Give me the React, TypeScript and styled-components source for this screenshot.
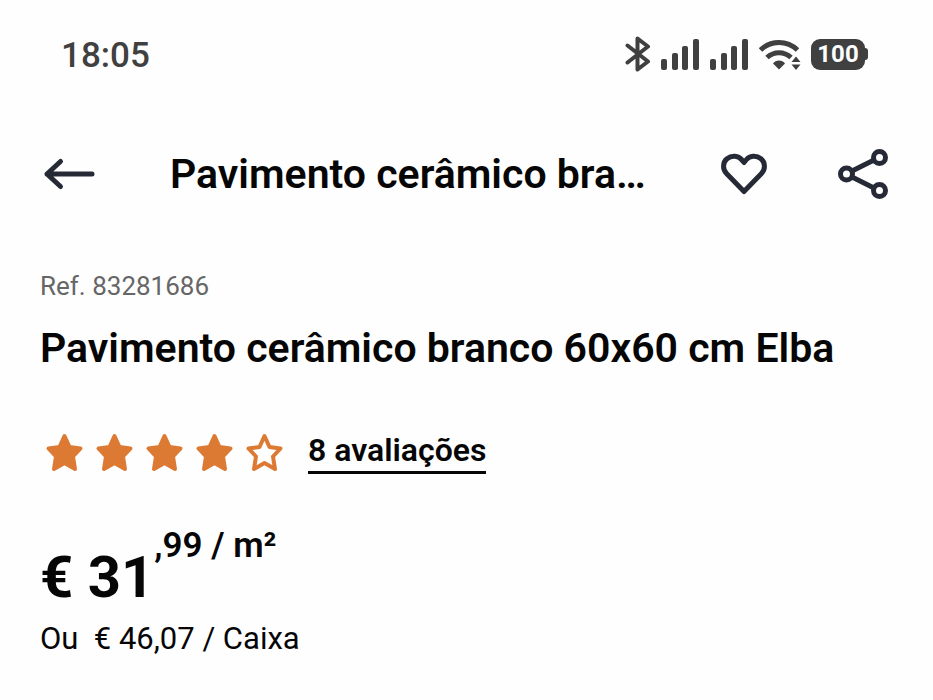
import React from "react";
import styled, { createGlobalStyle } from "styled-components";

const GlobalStyle = createGlobalStyle`
  * { box-sizing: border-box; }
  body {
    margin: 0;
    background: #fefefe;
    color: #060606;
    font-family: Roboto, "Liberation Sans", sans-serif;
  }
  h1, h2, p { margin: 0; font-weight: 600; }
  svg { display: block; flex: none; }
`;

const Screen = styled.main`
  display: flex;
  flex-direction: column;
`;

const StatusBar = styled.div`
  display: flex;
  align-items: center;
  justify-content: space-between;
  height: 108px;
  padding: 0 65px 0 61px;
  color: #404040;
`;

const Clock = styled.time`
  padding-top: 4px;
  font-size: 35px;
  font-weight: 500;
  line-height: 44px;
`;

const StatusIcons = styled.div`
  display: flex;
  align-items: center;
  gap: 10px;
`;

const Battery = styled.div`
  display: flex;
  align-items: center;
`;

const BatteryBody = styled.span`
  width: 54px;
  height: 31px;
  border-radius: 9px;
  background: #404040;
  color: #fefefe;
  font-size: 24px;
  font-weight: 700;
  line-height: 31px;
  text-align: center;
`;

const BatteryTip = styled.span`
  width: 3px;
  height: 12px;
  border-radius: 0 3px 3px 0;
  background: #404040;
`;

const Header = styled.header`
  display: flex;
  align-items: center;
  height: 132px;
  padding: 0 44px 0 42px;
`;

const HeaderTitle = styled.h2`
  flex: 1;
  min-width: 0;
  margin-left: 74px;
  overflow: hidden;
  white-space: nowrap;
  font-size: 41px;
  line-height: 52px;
`;

const IconButton = styled.button`
  padding: 0;
  border: 0;
  background: none;
  color: #252a36;
  cursor: pointer;
`;

const Actions = styled.div`
  display: flex;
  align-items: center;
  gap: 69px;
`;

const Product = styled.section`
  display: flex;
  flex-direction: column;
  padding: 28px 40px 0;
`;

const Reference = styled.p`
  color: #666;
  font-size: 26px;
  font-weight: 400;
  line-height: 36px;
`;

const ProductName = styled.h1`
  margin-top: 18px;
  font-size: 41px;
  line-height: 52px;
  white-space: nowrap;
`;

const Rating = styled.div`
  display: flex;
  align-items: center;
  gap: 18px;
  margin-top: 56px;
`;

const Stars = styled.div`
  display: flex;
`;

const ReviewsLink = styled.a`
  border-bottom: 3px solid #060606;
  color: inherit;
  font-size: 32px;
  font-weight: 600;
  line-height: 41px;
  text-decoration: none;
`;

const Price = styled.p`
  display: flex;
  align-items: flex-start;
  margin-top: 52px;
`;

const Amount = styled.span`
  margin-top: 17px;
  font-size: 58px;
  font-weight: 700;
  line-height: 68px;
`;

const Unit = styled.span`
  font-size: 35px;
  line-height: 40px;
`;

const BoxPrice = styled.p`
  margin-top: 8px;
  font-size: 31px;
  font-weight: 400;
  line-height: 40px;
  white-space: pre;
`;

const Signal = () => (
  <svg width="39" height="31" viewBox="0 0 39 31" fill="currentColor" aria-hidden="true">
    <rect x="0" y="20" width="6" height="11" rx="2" />
    <rect x="11" y="14" width="6" height="17" rx="2" />
    <rect x="21" y="7" width="6" height="24" rx="2" />
    <rect x="32" y="0" width="6" height="31" rx="2" />
  </svg>
);

const Bluetooth = () => (
  <svg width="26" height="36" viewBox="0 0 26 36" fill="none" stroke="currentColor" strokeWidth="4" strokeLinecap="round" strokeLinejoin="round" aria-hidden="true">
    <path d="M2.500 9.500 23 25.500 12.500 33.500V2.500L23 10.500 2.500 26.500" />
  </svg>
);

const Wifi = () => (
  <svg width="42" height="31" viewBox="0 0 42 31" fill="none" stroke="currentColor" aria-hidden="true">
    <path d="M1.500 11C12 1 28 1 38.500 11" strokeWidth="5" />
    <path d="M8 18.500C15 12 25 12 32 18.500" strokeWidth="5" />
    <path d="M14 24.500C16.500 20.500 23.500 20.500 26 24.500L20 30.500Z" fill="currentColor" stroke="none" />
    <path d="M32.500 23 37 17.500 41.500 23ZM32.500 25.500 37 31 41.500 25.500Z" fill="currentColor" stroke="none" />
  </svg>
);

const ArrowLeft = () => (
  <svg width="54" height="34" viewBox="0 0 54 34" fill="none" stroke="currentColor" strokeWidth="5" strokeLinecap="round" strokeLinejoin="round" aria-hidden="true">
    <path d="M50 17H5M18.500 4.500 5 17 18.500 29.500" />
    <path d="M5 17 11 11.500V22.500Z" fill="currentColor" stroke="none" />
  </svg>
);

const Heart = () => (
  <svg width="48" height="42" viewBox="0 0 48 42" fill="none" stroke="currentColor" strokeWidth="5" strokeLinejoin="round" aria-hidden="true">
    <path d="M24 38.500 6.500 20.500C2.500 16.500 2.500 9.500 7 5.800C12 1.800 18.500 3 21.500 6.500L24 9.500 26.500 6.500C29.500 3 36 1.800 41 5.800C45.500 9.500 45.500 16.500 41.500 20.500Z" />
  </svg>
);

const Share = () => (
  <svg width="52" height="52" viewBox="0 0 52 52" fill="none" stroke="currentColor" strokeWidth="5" aria-hidden="true">
    <path d="M15 23 36 12.500M15 29 36 39.500" />
    <circle cx="9.500" cy="26" r="6" />
    <circle cx="42.500" cy="9.500" r="6" />
    <circle cx="42.500" cy="42.500" r="6" />
  </svg>
);

const Star = ({ filled }: { filled: boolean }) => (
  <svg width="50" height="42" viewBox="0 0 50 42" fill={filled ? "#dc7a34" : "none"} stroke="#dc7a34" strokeWidth="4" strokeLinejoin="round" aria-hidden="true">
    <path d="M24.500 5 29.500 16 40.500 17.500 33 25.500 35 38 24.500 32 14 38 16 25.500 8.500 17.500 19.500 16Z" />
  </svg>
);

export default function App() {
  return (
    <Screen>
      <GlobalStyle />
      <StatusBar>
        <Clock>18:05</Clock>
        <StatusIcons>
          <Bluetooth />
          <Signal />
          <Signal />
          <Wifi />
          <Battery>
            <BatteryBody>100</BatteryBody>
            <BatteryTip />
          </Battery>
        </StatusIcons>
      </StatusBar>
      <Header>
        <IconButton aria-label="Voltar"><ArrowLeft /></IconButton>
        <HeaderTitle>Pavimento cerâmico bra…</HeaderTitle>
        <Actions>
          <IconButton aria-label="Adicionar aos favoritos"><Heart /></IconButton>
          <IconButton aria-label="Partilhar"><Share /></IconButton>
        </Actions>
      </Header>
      <Product>
        <Reference>Ref. 83281686</Reference>
        <ProductName>Pavimento cerâmico branco 60x60 cm Elba</ProductName>
        <Rating>
          <Stars role="img" aria-label="4 de 5 estrelas">
            {[1, 2, 3, 4, 5].map((n) => <Star key={n} filled={n <= 4} />)}
          </Stars>
          <ReviewsLink href="#avaliacoes">8 avaliações</ReviewsLink>
        </Rating>
        <Price>
          <Amount>€ 31</Amount>
          <Unit>,99 / m²</Unit>
        </Price>
        <BoxPrice>{"Ou  € 46,07 / Caixa"}</BoxPrice>
      </Product>
    </Screen>
  );
}
